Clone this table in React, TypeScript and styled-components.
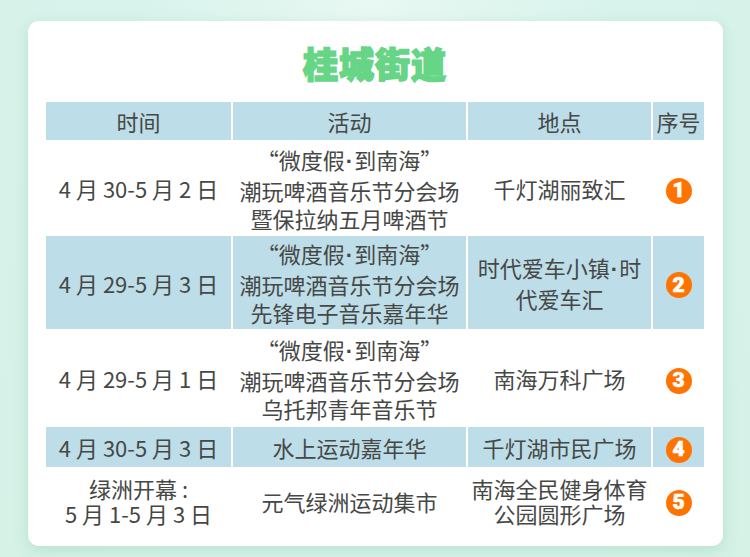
import React from 'react';
import styled, {createGlobalStyle} from "styled-components";

const rows = [
    {time: ["4 月 30-5 月 2 日"], act: ["“微度假·到南海”", "潮玩啤酒音乐节分会场", "暨保拉纳五月啤酒节"], place: ["千灯湖丽致汇"], h: 92},
    {time: ["4 月 29-5 月 3 日"], act: ["“微度假·到南海”", "潮玩啤酒音乐节分会场", "先锋电子音乐嘉年华"], place: ["时代爱车小镇·时", "代爱车汇"], h: 93},
    {time: ["4 月 29-5 月 1 日"], act: ["“微度假·到南海”", "潮玩啤酒音乐节分会场", "乌托邦青年音乐节"], place: ["南海万科广场"], h: 94},
    {time: ["4 月 30-5 月 3 日"], act: ["水上运动嘉年华"], place: ["千灯湖市民广场"], h: 40},
    {time: ["绿洲开幕 :", "5 月 1-5 月 3 日"], act: ["元气绿洲运动集市"], place: ["南海全民健身体育", "公园圆形广场"], h: 64, tight: true},
]

const GlobalStyle = createGlobalStyle`
  html, body {
    margin: 0;
    padding: 0;
  }
  body {
    width: 750px;
    height: 557px;
    overflow: hidden;
    background: radial-gradient(ellipse at 50% 0%, #e8f8f2 0%, #d8f3ec 45%, #d6f1e6 100%);
    font-family: "Noto Sans CJK SC", "Noto Sans", sans-serif;
  }
`

// the middle dot in the picture is the narrow latin one, not the CJK full-width one
const Text = ({text}: { text: string }) => {
    const parts = text.split("·")
    return (
        <Line>
            {parts.map((p, i) => (
                <React.Fragment key={i}>
                    {i > 0 && <Dot>·</Dot>}
                    {p}
                </React.Fragment>
            ))}
        </Line>
    )
}

const Lines = ({lines}: { lines: string[] }) => (
    <>
        {lines.map((l, i) => <Text key={i} text={l}/>)}
    </>
)

export default function App() {
    return (
        <Page>
            <GlobalStyle/>
            <Card>
                <Title>桂城街道</Title>
                <Table>
                    <colgroup>
                        <col style={{width: 185}}/>
                        <col style={{width: 233}}/>
                        <col style={{width: 183}}/>
                        <col style={{width: 51}}/>
                    </colgroup>
                    <thead>
                    <tr>
                        <Th>时间</Th>
                        <Th>活动</Th>
                        <Th>地点</Th>
                        <Th>序号</Th>
                    </tr>
                    </thead>
                    <tbody>
                    {rows.map((r, i) => (
                        <Row key={i} $blue={i % 2 === 1} $tight={!!r.tight} style={{height: r.h}}>
                            <Td><Lines lines={r.time}/></Td>
                            <Td><Lines lines={r.act}/></Td>
                            <Td><Lines lines={r.place}/></Td>
                            <Td><Badge>{i + 1}</Badge></Td>
                        </Row>
                    ))}
                    </tbody>
                </Table>
            </Card>
        </Page>
    );
}

const Page = styled.div`
  padding: 21px 27px 0 28px;
`

const Card = styled.div`
  background: #ffffff;
  border-radius: 11px;
  box-shadow: 0 4px 14px rgba(120, 200, 170, 0.35);
  padding: 20px 17px 11px 16px;
  height: 525px;
  box-sizing: border-box;
`

const Title = styled.h1`
  margin: 0 0 15px;
  text-align: center;
  font-size: 35px;
  line-height: 44px;
  font-weight: 900;
  color: #66d585;
  -webkit-text-stroke: 1.6px #66d585;
  letter-spacing: 1px;
`

const Table = styled.table`
  width: 662px;
  table-layout: fixed;
  border-collapse: separate;
  border-spacing: 2px;
  color: #464846;
  font-size: 22px;
`

const Th = styled.th`
  background: #bddde8;
  height: 38px;
  padding: 0;
  font-weight: 400;
  line-height: 28px;
  text-align: center;
  white-space: nowrap;
`

const Row = styled.tr<{ $blue: boolean; $tight: boolean }>`
  background: ${p => p.$blue ? "#bddde8" : "#ffffff"};
  line-height: ${p => p.$tight ? "25px" : "28px"};
`

const Td = styled.td`
  padding: 0;
  text-align: center;
  vertical-align: middle;
`

const Line = styled.div`
  white-space: nowrap;
`

const Dot = styled.span`
  font-family: "Liberation Sans", sans-serif;
  font-weight: 700;
  padding: 0 1px;
`

const Badge = styled.span`
  display: inline-flex;
  align-items: center;
  justify-content: center;
  width: 26px;
  height: 26px;
  border-radius: 50%;
  background: #ff7300;
  color: #ffffff;
  font-family: "Roboto", "Noto Sans", sans-serif;
  font-weight: 900;
  font-size: 21px;
  line-height: 1;
  vertical-align: middle;
  -webkit-text-stroke: 0.6px #ffffff;
`
